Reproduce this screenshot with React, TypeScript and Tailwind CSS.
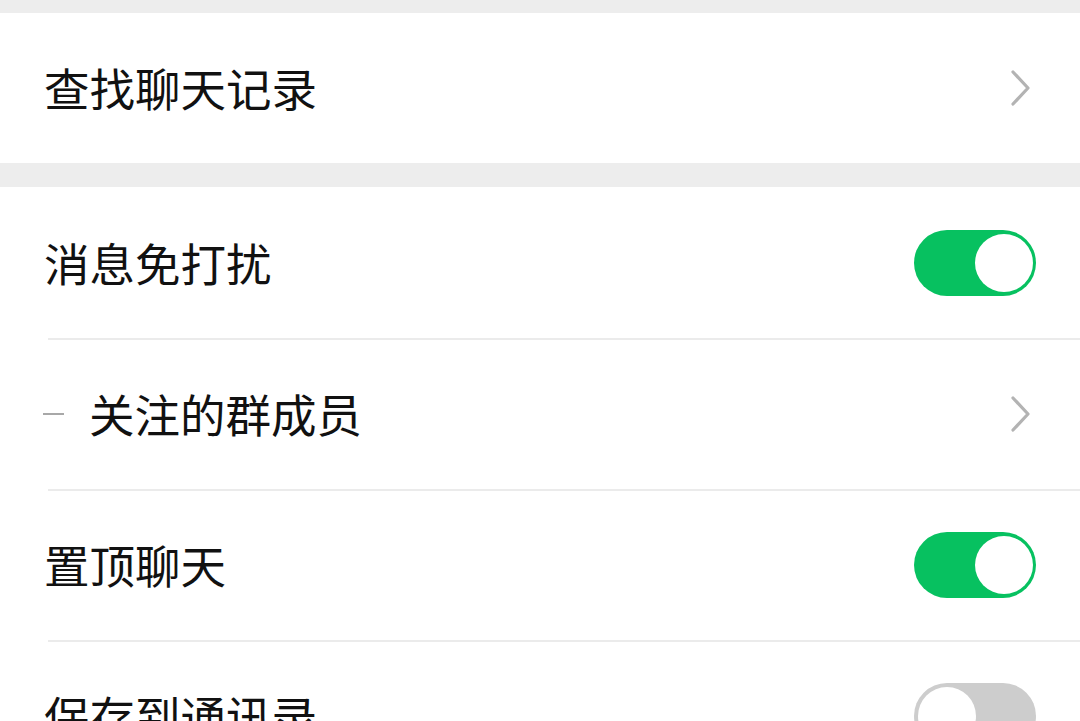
import React from "react";

function Chevron() {
  return (
    <svg width="22" height="36" viewBox="0 0 22 36" className="shrink-0">
      <path d="M3 2 L18 18 L3 34" fill="none" stroke="#b3b3b3" strokeWidth="3.2" strokeLinecap="round" strokeLinejoin="round" />
    </svg>
  );
}

function Toggle({ on }: { on: boolean }) {
  if (on) {
    return (
      <div className="flex h-[66px] w-[122px] shrink-0 items-center justify-end rounded-full bg-[#07c160] pr-[3px]">
        <div className="h-[58px] w-[58px] rounded-full bg-white" />
      </div>
    );
  }
  return (
    <div className="flex h-[66px] w-[122px] shrink-0 items-center justify-start rounded-full bg-[#cdcdcd] pl-[4px]">
      <div className="h-[58px] w-[58px] rounded-full bg-white" />
    </div>
  );
}

function Row({
  label,
  right,
  divider,
  dash,
}: {
  label: string;
  right: React.ReactNode;
  divider?: boolean;
  dash?: boolean;
}) {
  return (
    <div className={`relative flex h-[151px] items-center justify-between pr-[44px] ${dash ? "pl-[43px]" : "pl-[44px]"}`}>
      {divider ? <div className="absolute left-[48px] right-0 top-0 h-[2px] bg-[#ebebeb]" /> : null}
      <div className="flex items-center">
        {dash ? <div className="mr-[25px] h-[2px] w-[21px] bg-[#a8a8a8]" /> : null}
        <span className="text-[45.5px] font-normal leading-none text-[#111111]">{label}</span>
      </div>
      {right}
    </div>
  );
}

export default function App() {
  return (
    <div
      className="h-[721px] w-[1080px] overflow-hidden bg-[#ededed]"
      style={{ fontFamily: '"Noto Sans CJK SC", "Noto Sans", sans-serif' }}
    >
      <div className="h-[13px]" />
      <div className="bg-white">
        <div className="flex h-[150px] items-center justify-between pl-[44px] pr-[48px]">
          <span className="text-[45.5px] font-normal leading-none text-[#111111]">查找聊天记录</span>
          <Chevron />
        </div>
      </div>
      <div className="h-[24px]" />
      <div className="bg-white">
        <Row label="消息免打扰" right={<Toggle on />} />
        <Row label="关注的群成员" dash divider right={<div className="mr-[4px]"><Chevron /></div>} />
        <Row label="置顶聊天" divider right={<Toggle on />} />
        <Row label="保存到通讯录" divider right={<Toggle on={false} />} />
      </div>
    </div>
  );
}
